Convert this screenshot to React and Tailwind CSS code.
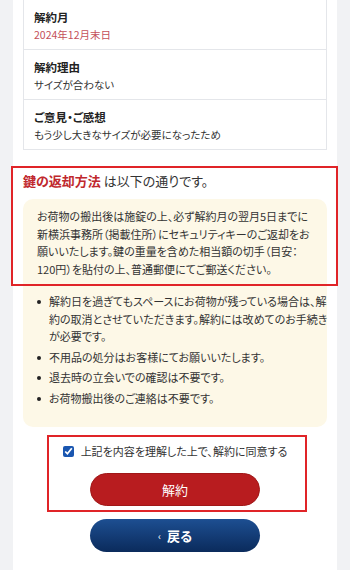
import React from 'react';

const ROWS = [
  { label: '解約月', value: '2024年12月末日', accent: true },
  { label: '解約理由', value: 'サイズが合わない' },
  { label: 'ご意見・ご感想', value: 'もう少し大きなサイズが必要になったため' },
];

const NOTES = [
  ['解約日を過ぎてもスペースにお荷物が残っている場合は、解', '約の取消とさせていただきます。解約には改めてのお手続き', 'が必要です。'],
  ['不用品の処分はお客様にてお願いいたします。'],
  ['退去時の立会いでの確認は不要です。'],
  ['お荷物搬出後のご連絡は不要です。'],
];

const App = () => {
  return (
    <div className="min-h-screen bg-[#f1f2f4] font-['Noto_Sans_CJK_JP','Noto_Sans',sans-serif] text-[#333] [font-feature-settings:'palt']">
      <div className="relative mx-[13px] min-h-[570px] bg-white px-[10px] pb-[18px]">
        {/* Summary card */}
        <div className="-mt-px border border-[#e4e6ea] bg-white">
          {ROWS.map((r, i) => (
            <div
              key={r.label}
              className={`px-[10px] pt-[8px] ${i < ROWS.length - 1 ? 'h-[50px] border-b border-[#e4e6ea]' : 'h-[49px]'}`}
            >
              <div className="text-[11.5px] leading-[19px] font-bold text-[#222]">{r.label}</div>
              <div className={`text-[10.5px] leading-[16px] ${r.accent ? 'text-[#c4505a]' : 'text-[#333]'}`}>{r.value}</div>
            </div>
          ))}
        </div>

        {/* Key return */}
        <p className="mt-[21px] text-[13px] leading-[20px] text-[#333]">
          <span className="font-bold text-[#c0282d]">鍵の返却方法</span> は以下の通りです。
        </p>

        <div className="mt-[8px] rounded-[10px] bg-[#fdf8e7] px-[14px] pt-[9px] pb-[20px] text-[11px] text-[#333]">
          <p className="leading-[17.5px] whitespace-nowrap">
            お荷物の搬出後は施錠の上、必ず解約月の翌月5日までに<br />
            新横浜事務所（掲載住所）にセキュリティキーのご返却をお<br />
            願いいたします。鍵の重量を含めた相当額の切手（目安：<br />
            120円）を貼付の上、普通郵便にてご郵送ください。
          </p>

          <ul className="mt-[15px] flex flex-col gap-[3px]">
            {NOTES.map((lines, i) => (
              <li key={i} className="flex leading-[17.5px]">
                <span className="mt-[7px] mr-[8px] h-[4px] w-[4px] shrink-0 rounded-full bg-[#222]" />
                <span className="whitespace-nowrap">
                  {lines.map((l, j) => (
                    <React.Fragment key={j}>
                      {l}
                      {j < lines.length - 1 && <br />}
                    </React.Fragment>
                  ))}
                </span>
              </li>
            ))}
          </ul>
        </div>

        {/* Agreement */}
        <div className="mt-[9px] flex flex-col items-center">
          <label className="flex h-[30px] items-center gap-[7px] text-[11px] text-[#333]">
            <input type="checkbox" defaultChecked className="h-[11px] w-[11px] accent-[#1a56b0]" />
            上記を内容を理解した上で、解約に同意する
          </label>
          <button className="mt-[7px] h-[33px] w-[170px] rounded-full border border-[#a01818] bg-[#b81c1f] text-[13px] text-white">
            解約
          </button>
          <button className="mt-[13px] flex h-[33px] w-[170px] items-center justify-center gap-[6px] rounded-full bg-gradient-to-b from-[#1d4f92] to-[#0b2b5c] text-[13px] font-bold text-white">
            <span className="text-[10px] font-normal">‹</span>戻る
          </button>
        </div>

        {/* Highlight overlays */}
        <div className="pointer-events-none absolute left-[-2px] top-[167px] h-[120px] w-[327px] border-2 border-[#e02428]" />
        <div className="pointer-events-none absolute left-[34px] top-[436px] h-[77px] w-[260px] border-2 border-[#e02428]" />
      </div>
    </div>
  );
};

export default App;
